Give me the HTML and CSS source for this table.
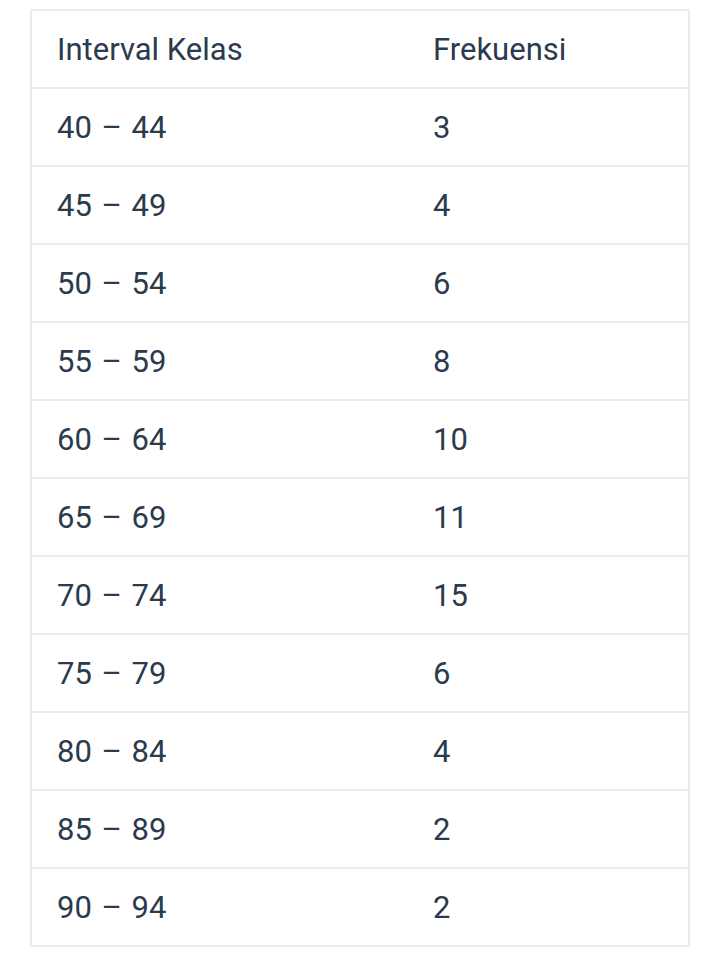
FILE: index.html
```html
<!DOCTYPE html>
<html>
<head>
<meta charset="utf-8">
<link rel="stylesheet" href="styles.css">
</head>
<body>
<table class="freq">
  <thead>
    <tr><th class="c1">Interval Kelas</th><th class="c2">Frekuensi</th></tr>
  </thead>
  <tbody>
    <tr><td>40 <span class="dash">–</span> 44</td><td>3</td></tr>
    <tr><td>45 <span class="dash">–</span> 49</td><td>4</td></tr>
    <tr><td>50 <span class="dash">–</span> 54</td><td>6</td></tr>
    <tr><td>55 <span class="dash">–</span> 59</td><td>8</td></tr>
    <tr><td>60 <span class="dash">–</span> 64</td><td>10</td></tr>
    <tr><td>65 <span class="dash">–</span> 69</td><td>11</td></tr>
    <tr><td>70 <span class="dash">–</span> 74</td><td>15</td></tr>
    <tr><td>75 <span class="dash">–</span> 79</td><td>6</td></tr>
    <tr><td>80 <span class="dash">–</span> 84</td><td>4</td></tr>
    <tr><td>85 <span class="dash">–</span> 89</td><td>2</td></tr>
    <tr><td>90 <span class="dash">–</span> 94</td><td>2</td></tr>
  </tbody>
</table>
</body>
</html>
```
FILE: styles.css
```css
html, body {
  margin: 0;
  padding: 0;
  background: #ffffff;
}
body {
  padding: 9px 0 0 30px;
  font-family: Roboto, "Noto Sans", sans-serif;
  color: #2b3a4d;
}
.freq {
  border-collapse: collapse;
  width: 660px;
  table-layout: fixed;
}
.freq th, .freq td {
  border-top: 2px solid #ebebeb;
  border-bottom: 2px solid #ebebeb;
  height: 76px;
  padding: 0 0 0 25px;
  font-size: 31px;
  font-weight: 400;
  text-align: left;
  vertical-align: middle;
  line-height: 1;
}
.freq th:first-child, .freq td:first-child {
  border-left: 2px solid #ebebeb;
}
.freq th:last-child, .freq td:last-child {
  border-right: 2px solid #ebebeb;
}
.c1 { width: 351px; }
.dash {
  margin: 0 2px;
}
```
